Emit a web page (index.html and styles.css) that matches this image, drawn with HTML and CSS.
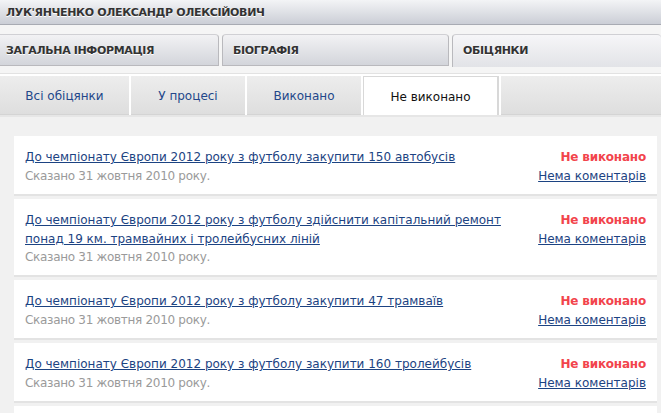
FILE: index.html
```html
<!DOCTYPE html>
<html lang="uk">
<head>
	<meta charset="UTF-8">
	<title>Обіцянки</title>
	<link rel="stylesheet" href="styles.css">
</head>
<body>
	<div class="page">
		<div class="head">ЛУК'ЯНЧЕНКО ОЛЕКСАНДР ОЛЕКСІЙОВИЧ</div>
		<div class="tabs">
			<a class="tab">ЗАГАЛЬНА ІНФОРМАЦІЯ</a>
			<a class="tab">БІОГРАФІЯ</a>
			<a class="tab active">ОБІЦЯНКИ</a>
		</div>
		<div class="subtabs">
			<a class="sub">Всі обіцянки</a>
			<a class="sub">У процесі</a>
			<a class="sub">Виконано</a>
			<a class="sub current">Не виконано</a>
			<span class="sub rest"></span>
		</div>
		<div class="promises">
			<div class="promise">
				<div class="info">
					<a class="title" href="#">До чемпіонату Європи 2012 року з футболу закупити 150 автобусів</a>
					<div class="date">Сказано 31 жовтня 2010 року.</div>
				</div>
				<div class="state">
					<div class="fail">Не виконано</div>
					<a class="comments" href="#">Нема коментарів</a>
				</div>
			</div>
			<div class="promise">
				<div class="info">
					<a class="title" href="#">До чемпіонату Європи 2012 року з футболу здійснити капітальний ремонт понад 19 км. трамвайних і тролейбусних ліній</a>
					<div class="date">Сказано 31 жовтня 2010 року.</div>
				</div>
				<div class="state">
					<div class="fail">Не виконано</div>
					<a class="comments" href="#">Нема коментарів</a>
				</div>
			</div>
			<div class="promise">
				<div class="info">
					<a class="title" href="#">До чемпіонату Європи 2012 року з футболу закупити 47 трамваїв</a>
					<div class="date">Сказано 31 жовтня 2010 року.</div>
				</div>
				<div class="state">
					<div class="fail">Не виконано</div>
					<a class="comments" href="#">Нема коментарів</a>
				</div>
			</div>
			<div class="promise">
				<div class="info">
					<a class="title" href="#">До чемпіонату Європи 2012 року з футболу закупити 160 тролейбусів</a>
					<div class="date">Сказано 31 жовтня 2010 року.</div>
				</div>
				<div class="state">
					<div class="fail">Не виконано</div>
					<a class="comments" href="#">Нема коментарів</a>
				</div>
			</div>
			<div class="promise empty"></div>
		</div>
	</div>
</body>
</html>
```

FILE: styles.css
```css
html, body{
	margin: 0;
	padding: 0;
	background: #f5f5f5;
	font-family: "DejaVu Sans", Verdana, sans-serif;
	font-size: 12px;
	overflow: hidden;
}
.page{
	width: 661px;
}
.head{
	height: 24px;
	line-height: 26px;
	padding-left: 6px;
	background: linear-gradient(#f3f4f6, #cbced6);
	border-bottom: 1px solid #a8abb3;
	color: #333;
	font-weight: bold;
	font-size: 11px;
	letter-spacing: -0.35px;
	text-shadow: 0 1px 0 #fff;
}
.tabs{
	display: flex;
	gap: 3px;
	margin-top: 9px;
	height: 32px;
}
.tab{
	box-sizing: border-box;
	height: 32px;
	line-height: 31px;
	padding-left: 6px;
	border: 1px solid #b9b9bd;
	border-top-color: #d0d0d4;
	border-radius: 4px 4px 0 0;
	background: linear-gradient(#f2f2f4, #d3d5db);
	color: #333;
	font-weight: bold;
	font-size: 11px;
	letter-spacing: -0.35px;
	text-shadow: 0 1px 0 #fff;
}
.tab:nth-child(1){
	width: 219px;
	border-left: none;
	border-top-left-radius: 0;
}
.tab:nth-child(2){
	width: 227px;
	padding-left: 10px;
}
.tab.active{
	flex: 1;
	padding-left: 10px;
	border-right: none;
	border-bottom: none;
	height: 33px;
	background: linear-gradient(#f6f6f8, #e2e3e7);
}
.subtabs{
	display: flex;
	gap: 2px;
	margin-top: 7px;
	border-top: 1px solid #e2e2e2;
	padding-top: 2px;
	background: #fff;
	height: 39px;
	border-bottom: 2px solid #e6e6e6;
}
.sub{
	display: block;
	box-sizing: border-box;
	height: 39px;
	line-height: 40px;
	text-align: center;
	background: linear-gradient(#ededed, #dedede);
	border-bottom: 1px solid #d4d4d4;
	color: #23478a;
}
.sub:nth-child(1){ width: 129px; }
.sub:nth-child(2){ width: 114px; }
.sub:nth-child(3){ width: 114px; }
.sub.current{
	width: 136px;
	background: #fff;
	color: #111;
	border: 1px solid #d8d8d8;
	border-bottom: none;
	border-right: 2px solid #d8d8d8;
}
.sub.rest{
	flex: 1;
}
.promises{
	background: #f1f1f1;
	padding: 19px 4px 0 14px;
}
.promise{
	display: flex;
	justify-content: space-between;
	background: #fff;
	border-bottom: 2px solid #e3e3e3;
	margin-bottom: 3px;
	padding: 12px 11px 9px 11px;
}
.promise.empty{
	height: 30px;
}
.title{
	color: #1c4382;
	line-height: 18.5px;
	text-decoration: underline;
}
.info{
	width: 490px;
}
.date{
	color: #9a9a9a;
	line-height: 18px;
	letter-spacing: -0.3px;
}
.state{
	text-align: right;
	line-height: 18.5px;
	white-space: nowrap;
}
.fail{
	color: #f2444c;
	font-weight: bold;
	letter-spacing: -0.2px;
}
.comments{
	color: #1c4382;
}
```
